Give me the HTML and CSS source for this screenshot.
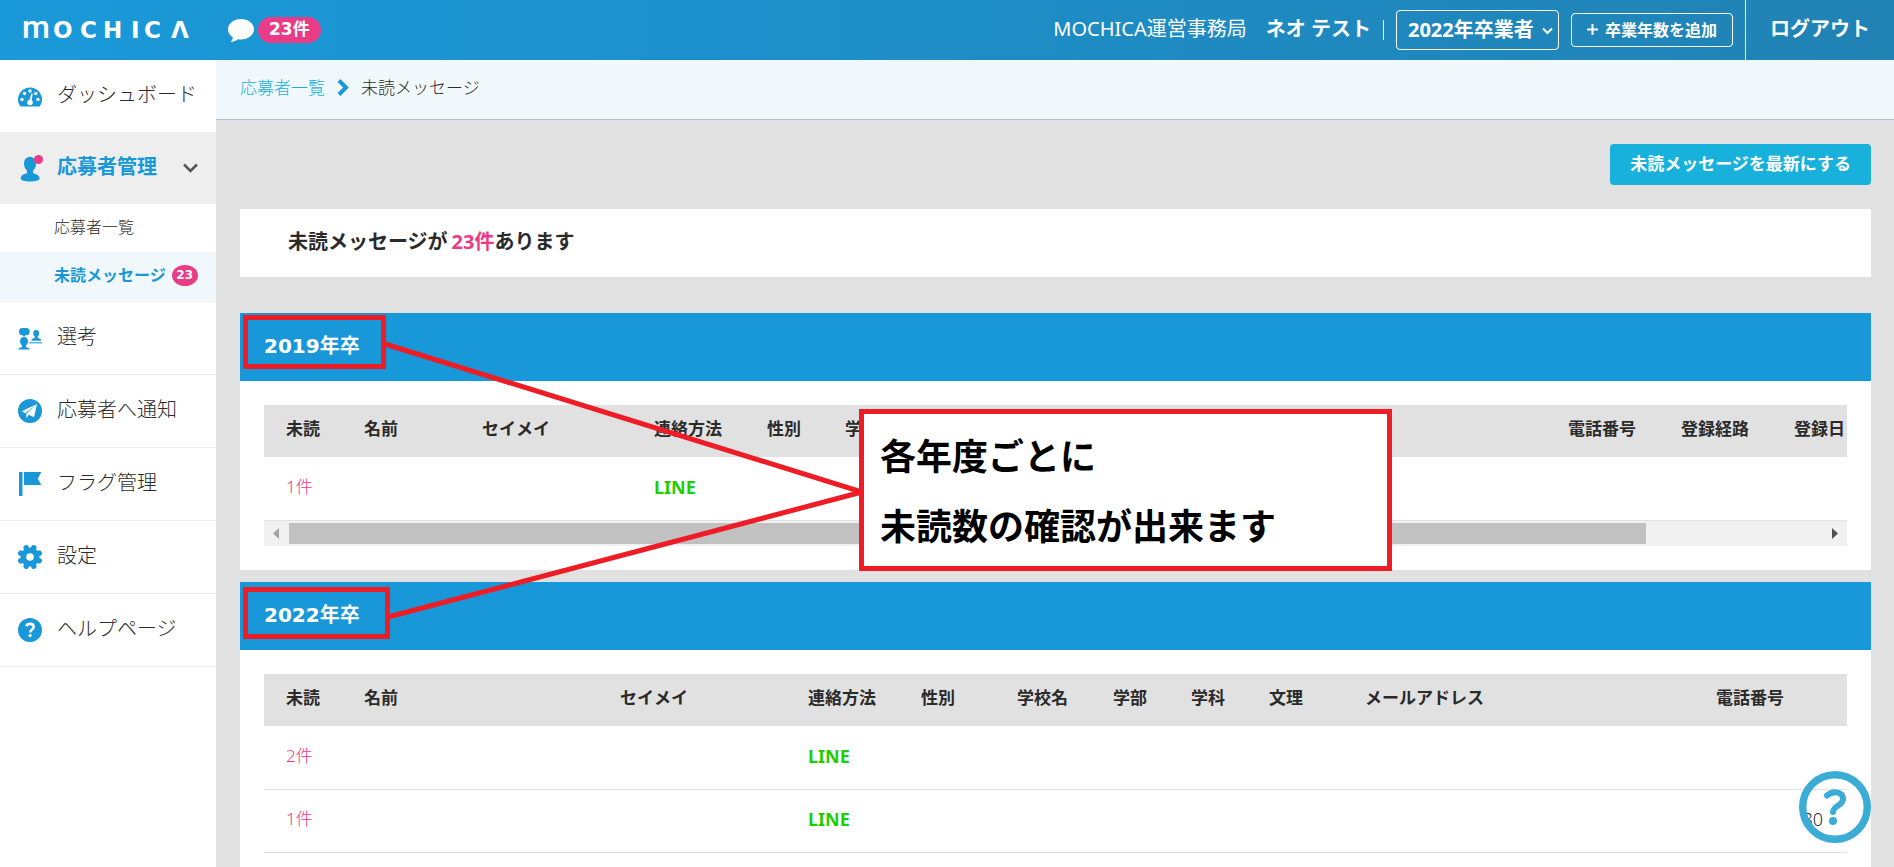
FILE: index.html
```html
<!DOCTYPE html>
<html lang="ja">
<head>
<meta charset="utf-8">
<meta name="viewport" content="width=device-width, initial-scale=1">
<title>未読メッセージ | MOCHICA</title>
<link rel="stylesheet" href="styles.css">
</head>
<body>
<div class="page">
  <header class="topbar">
    <a class="logo" href="#" aria-label="MOCHICA">
      <svg width="170" height="20" viewBox="0 0 170 20" fill="#fff">
        <text class="logo-m" x="-2" y="18">m</text>
        <text class="logo-caps" x="29 56 79 107 120 147" y="18">OCHICΛ</text>
      </svg>
    </a>
    <a class="unread" href="#">
      <svg width="26" height="23" viewBox="0 0 26 23" fill="#fff"><path d="M13 0C5.800 0 0 4.600 0 10.300c0 3.300 1.900 6.200 4.900 8.100-.2 1.300-.8 2.700-1.800 3.700-.3.400 0 .9.400.8 2.500-.2 4.700-1.200 6.400-2.600 1 .2 2 .3 3.100.3 7.200 0 13-4.600 13-10.300S20.200 0 13 0z"/></svg>
      <span class="unread-badge">23件</span>
    </a>
    <div class="account">
      <span class="company">MOCHICA運営事務局</span>
      <strong class="user">ネオ テスト</strong>
      <span class="bar"></span>
      <span class="year">
        <select class="year-select" aria-label="卒業年"><option>2022年卒業者</option></select>
        <svg class="year-arrow" width="11" height="8" viewBox="0 0 11 8" fill="none" stroke="#fff" stroke-width="2"><path d="M1 1.500l4.500 4.500L10 1.500"/></svg>
      </span>
      <button class="add-year" type="button"><svg width="11" height="11" viewBox="0 0 11 11" stroke="#fff" stroke-width="2"><path d="M5.500 0v11M0 5.500h11"/></svg>卒業年数を追加</button>
    </div>
    <a class="logout" href="#">ログアウト</a>
  </header>

  <div class="body">
    <nav class="sidebar">
      <a class="item plain" href="#">
        <svg width="24" height="24" viewBox="0 0 24 24"><path d="M2.500 22.500C.9 20.500 0 18 0 15.500 0 9 5.400 3.500 12 3.500S24 9 24 15.500c0 2.500-.9 5-2.500 7z" fill="#1998d9"/><g fill="#fff"><circle cx="4" cy="15.500" r="1.700"/><circle cx="6.500" cy="9.500" r="1.700"/><circle cx="12" cy="7" r="1.700"/><circle cx="17.700" cy="9.500" r="1.700"/><circle cx="20" cy="15.500" r="1.700"/><circle cx="12" cy="18.500" r="2.800"/><path d="M13.400 9.500l1.300.3-1.500 9-2.400-.6z"/></g></svg>
        <span class="label">ダッシュボード</span>
      </a>
      <a class="item plain current" href="#">
        <svg width="24" height="28" viewBox="0 0 24 28" overflow="visible"><path d="M12 3c-3.800 0-6 2.700-6 6.500 0 3 1 5.500 3 7v2.700c-3.500.8-6.300 2.300-6.300 5 0 2.300 4 3.300 9.300 3.300s9.600-1 9.600-3.300c0-2.700-3.100-4.200-6.600-5v-2.700c2-1.500 3-4 3-7C18 5.700 15.800 3 12 3z" fill="#1998d9"/><circle cx="20.500" cy="5.500" r="4.500" fill="#ea3c86"/></svg>
        <span class="label">応募者管理</span>
        <svg class="caret" width="15" height="10" viewBox="0 0 15 10" fill="none" stroke="#555" stroke-width="2.500"><path d="M1 1.500l6.500 6.500L14 1.500"/></svg>
      </a>
      <div class="submenu">
        <a class="sub" href="#">応募者一覧</a>
        <a class="sub selected" href="#">未読メッセージ<span class="count">23</span></a>
      </div>
      <a class="item" href="#">
        <svg width="24" height="24" viewBox="0 0 24 24" fill="#1998d9"><path d="M4 2h4.500c2 0 3.200 1.400 3.200 3.500S10.500 9.200 8.500 9.200H7.300L6 11 4.700 9.200H4C2 9.200 1 7.600 1 5.500S2 2 4 2zM6 11c2.700 0 4 1.700 4 4 0 2-.7 3.400-2 4.400v1.800c2 .3 3.700.8 4 2.300H0c.3-1.500 2-2 4-2.300v-1.800c-1.300-1-2-2.400-2-4.400 0-2.300 1.300-4 4-4z"/><path d="M18.200 4c2 0 3 1.300 3 3 0 1.600-.5 2.700-1.400 3.400v1.700c1.800.3 3.200 1 3.400 2.600h-9.900c.2-1.600 1.600-2.300 3.400-2.600v-1.700c-1-.7-1.500-1.800-1.500-3.400 0-1.700 1-3 3-3z"/><path d="M11 16h13v1.500H11z" opacity=".7"/></svg>
        <span class="label">選考</span>
      </a>
      <a class="item" href="#">
        <svg width="24" height="24" viewBox="0 0 24 24"><circle cx="12" cy="12" r="12" fill="#1998d9"/><path d="M19 5L3.800 12.200l3.500 2zM19 5L8.300 14.700v4.300l2.200-2.800zM19 5l-8 10.700 5 2.500z" fill="#fff"/></svg>
        <span class="label">応募者へ通知</span>
      </a>
      <a class="item" href="#">
        <svg width="24" height="24" viewBox="0 0 24 24" fill="#1998d9"><path d="M1 0h3.500v24H1zM6 0h17.300l-3.500 6.700 3.500 6.300H6z"/></svg>
        <span class="label">フラグ管理</span>
      </a>
      <a class="item" href="#">
        <svg width="24" height="24" viewBox="0 0 24 24"><g fill="#1998d9"><circle cx="12" cy="12" r="9.500"/><g stroke="#1998d9" stroke-width="5.500" stroke-linecap="round"><path d="M8.200 2.800l7.600 18.400M15.800 2.800L8.200 21.200M2.800 8.200l18.400 7.600M2.800 15.800l18.400-7.600"/></g></g><circle cx="12" cy="12" r="3.800" fill="#fff"/></svg>
        <span class="label">設定</span>
      </a>
      <a class="item" href="#">
        <svg width="24" height="24" viewBox="0 0 24 24"><circle cx="12" cy="12" r="12" fill="#1998d9"/><path d="M8.300 8.200c.6-1.600 2-2.300 3.700-2.300 2.200 0 3.700 1.200 3.700 3 0 2.600-3.500 2.700-3.500 5.600" fill="none" stroke="#fff" stroke-width="2.600"/><circle cx="12.100" cy="17.600" r="1.700" fill="#fff"/></svg>
        <span class="label">ヘルプページ</span>
      </a>
    </nav>

    <div class="content">
      <div class="crumbs">
        <a href="#">応募者一覧</a>
        <svg width="12" height="17" viewBox="0 0 12 17" fill="none" stroke="#1998d9" stroke-width="4"><path d="M2 1.500l7 7-7 7"/></svg>
        <span>未読メッセージ</span>
      </div>
      <main class="main">
        <button class="refresh" type="button">未読メッセージを最新にする</button>
        <p class="notice">未読メッセージが<em>23件</em>あります</p>

        <section class="group">
          <h2 class="group-title">2019年卒</h2>
          <div class="group-body">
            <div class="scroller">
              <table class="list y2019">
                <colgroup><col class="c-unread"><col class="c-name"><col class="c-kana"><col class="c-way"><col class="c-sex"><col class="c-school"><col class="c-short"><col class="c-short"><col class="c-field"><col class="c-mail"><col class="c-tel"><col class="c-route"><col class="c-date"></colgroup>
                <thead><tr><th>未読</th><th>名前</th><th>セイメイ</th><th>連絡方法</th><th>性別</th><th>学校名</th><th></th><th></th><th></th><th></th><th>電話番号</th><th>登録経路</th><th>登録日</th></tr></thead>
                <tbody><tr><td><a class="num" href="#">1件</a></td><td></td><td></td><td class="line">LINE</td><td></td><td></td><td></td><td></td><td></td><td></td><td></td><td></td><td></td></tr></tbody>
              </table>
            </div>
            <div class="scrollbar">
              <svg width="25" height="25" viewBox="0 0 25 25" fill="#a3a3a3"><path d="M15 7v11l-6-5.500z"/></svg>
              <div class="track"><div class="thumb"></div></div>
              <svg width="25" height="25" viewBox="0 0 25 25" fill="#505050"><path d="M10 7v11l6-5.500z"/></svg>
            </div>
          </div>
        </section>

        <section class="group last">
          <h2 class="group-title">2022年卒</h2>
          <div class="group-body">
            <div class="scroller">
              <table class="list y2022">
                <colgroup><col class="c-unread"><col class="c-name"><col class="c-kana"><col class="c-way"><col class="c-sex"><col class="c-school"><col class="c-short"><col class="c-short"><col class="c-field"><col class="c-mail"><col class="c-tel"></colgroup>
                <thead><tr><th>未読</th><th>名前</th><th>セイメイ</th><th>連絡方法</th><th>性別</th><th>学校名</th><th>学部</th><th>学科</th><th>文理</th><th>メールアドレス</th><th>電話番号</th></tr></thead>
                <tbody>
                  <tr><td><a class="num" href="#">2件</a></td><td></td><td></td><td class="line">LINE</td><td></td><td></td><td></td><td></td><td></td><td></td><td></td></tr>
                  <tr><td><a class="num" href="#">1件</a></td><td></td><td></td><td class="line">LINE</td><td></td><td></td><td></td><td></td><td></td><td></td><td class="tel">80</td></tr>
                </tbody>
              </table>
            </div>
          </div>
        </section>
      </main>
    </div>
  </div>

  <svg class="marks" width="1894" height="867" viewBox="0 0 1894 867" fill="none" stroke="#ee1c24" stroke-width="5">
    <path d="M245.500 317.500h138v49h-138zM245.500 589.500h142v47h-142zM385 344l477 148-474 125"/>
  </svg>
  <aside class="callout">各年度ごとに<br>未読数の確認が出来ます</aside>
  <button class="help" type="button" aria-label="ヘルプ">
    <svg width="72" height="72" viewBox="0 0 72 72" fill="none" stroke="#3aacd6"><circle cx="36" cy="36" r="32.300" stroke-width="7.400"/><path d="M28 24.500c2.500-2.200 5.200-3.300 8.200-3.300 4.700 0 7.800 2.700 7.800 6.800 0 6.800-10 6.500-10 13" stroke-width="6" stroke-linecap="round"/><circle cx="34" cy="50" r="4" fill="#3aacd6" stroke="none"/></svg>
  </button>
</div>
</body>
</html>
```
FILE: styles.css
```css
* { box-sizing: border-box; }
body {
  margin: 0;
  background: #e1e1e1;
  color: #2a2a2a;
  font-family: "Noto Sans", "Noto Sans CJK JP", sans-serif;
  font-size: 17px;
  line-height: 24px;
}
a { color: inherit; text-decoration: none; }
svg { display: block; flex: none; }
button, select { font-family: inherit; cursor: pointer; }

.page { position: relative; display: flex; flex-direction: column; min-height: 100vh; overflow: hidden; }

/* top bar */
.topbar {
  display: flex;
  height: 60px;
  color: #fff;
  font-size: 20px;
  background: linear-gradient(to right, #1a99d9, #2182b4);
}
.logo { display: flex; align-items: center; padding-left: 24px; }
.logo svg { overflow: visible; }
.logo-m { font: 500 32px Roboto, sans-serif; }
.logo-caps { font: 700 23px "DejaVu Sans", sans-serif; }
.unread { display: flex; align-items: center; gap: 4px; margin-left: 34px; }
.unread-badge {
  padding: 0 11px 2px;
  border-radius: 13px;
  background: #ea3c86;
  font: 700 17px/24px "DejaVu Sans", "Noto Sans CJK JP", sans-serif;
}
.account { display: flex; align-items: center; margin-left: auto; padding-right: 12px; white-space: nowrap; }
.company, .user, .logout { padding-bottom: 3px; }
.company { margin-right: 19px; }
.bar { width: 1px; height: 20px; margin: 0 12px; background: #fff; }
.year { position: relative; margin-right: 12px; }
.year-select {
  appearance: none;
  display: block;
  height: 40px;
  width: 163px;
  padding: 0 0 2px 11px;
  border: 1px solid #fff;
  border-radius: 4px;
  background: transparent;
  color: #fff;
  font-size: 20px;
  font-weight: 700;
}
.year-arrow { position: absolute; right: 6px; top: 17px; pointer-events: none; }
.add-year {
  display: flex;
  align-items: center;
  gap: 7px;
  height: 34px;
  padding: 0 15px 2px;
  border: 1px solid #fff;
  border-radius: 4px;
  background: transparent;
  color: #fff;
  font-size: 16px;
  font-weight: 700;
}
.logout { display: flex; align-items: center; padding-left: 24px; padding-right: 24px; border-left: 1px solid #fff; font-weight: 700; }

/* side navigation */
.body { display: flex; flex: 1; }
.sidebar { flex: none; width: 216px; background: #fff; }
.item {
  display: flex;
  align-items: center;
  gap: 15px;
  height: 73px;
  padding: 0 18px;
  border-bottom: 1px solid #eee;
  font-size: 20px;
  font-weight: 300;
  white-space: nowrap;
}
.plain { height: 72px; border-bottom: 0; }
.label { padding-bottom: 3px; }
.current { background: #eee; color: #1998d9; font-weight: 700; }
.caret { margin-left: auto; }
.submenu { padding-bottom: 1px; border-bottom: 1px solid #eee; }
.sub {
  display: flex;
  align-items: center;
  gap: 6px;
  height: 48px;
  padding: 0 0 2px 54px;
  font-size: 16px;
  white-space: nowrap;
  font-weight: 300;
}
.selected { background: #f0f8fc; color: #1998d9; font-weight: 700; }
.count {
  width: 26px;
  border-radius: 50%;
  background: #ea3c86;
  color: #fff;
  font: 700 12px/21px "DejaVu Sans", sans-serif;
  text-align: center;
}

/* content */
.content { display: flex; flex: 1; flex-direction: column; min-width: 0; }
.crumbs {
  display: flex;
  align-items: center;
  gap: 12px;
  height: 60px;
  padding: 0 24px 4px;
  border-bottom: 1px solid #b6c0dc;
  background: #f0f8fc;
  font-weight: 300;
}
.crumbs a { color: #18b1dc; }
.main { display: flex; flex: 1; flex-direction: column; padding: 24px 23px 0 24px; }
.refresh {
  align-self: flex-end;
  height: 41px;
  padding: 0 20px 4px;
  border: 0;
  border-radius: 4px;
  background: #18b1dc;
  color: #fff;
  font-size: 17px;
  font-weight: 700;
}
.notice {
  margin: 24px 0 36px;
  padding: 21px 48px 23px;
  background: #fff;
  font-size: 20px;
  font-weight: 700;
}
.notice em { margin-left: 4px; color: #ea3c86; font-style: normal; }
.group { margin-bottom: 12px; background: #fff; }
.last { flex: 1; margin-bottom: 0; }
.group-title {
  margin: 0;
  padding: 21px 24px 23px;
  background: #1998d9;
  color: #fff;
  font: 700 20px/24px "DejaVu Sans", "Noto Sans CJK JP", sans-serif;
}
.group-body { padding: 24px; }
.last .group-body { padding-bottom: 0; }
.scroller { overflow: hidden; }
.list { table-layout: fixed; border-collapse: separate; border-spacing: 0; width: 100%; }
.list th, .list td { padding: 0 0 4px 22px; text-align: left; white-space: nowrap; }
.list th { height: 53px; border-bottom: 1px solid #fff; background: #e1e1e1; background-clip: padding-box; font-weight: 700; }
.list td { height: 63px; border-bottom: 1px solid #e1e1e1; font-weight: 300; }
.num { color: #ea3c86; }
.list .line { color: #1fce00; font-size: 18px; font-weight: 700; }
.list .tel { padding-right: 24px; text-align: right; font-size: 18px; }
.c-unread, .c-short { width: 78px; }
.c-school, .c-field { width: 96px; }
.c-way, .c-tel, .c-route { width: 113px; }
.y2019 .c-name { width: 118px; }
.y2019 .c-kana { width: 172px; }
.y2019 .c-sex { width: 78px; }
.y2019 .c-date { width: 75px; }
.y2022 .c-name { width: 256px; }
.y2022 .c-kana { width: 188px; }
.y2022 .c-sex { width: 96px; }
.y2022 .c-tel { width: 153px; }
.scrollbar { display: flex; height: 25px; background: #f1f1f1; }
.track { flex: 1; padding: 2px 0; }
.thumb { width: 88.5%; height: 21px; background: #c1c1c1; }

/* overlays */
.marks { position: absolute; left: 0; top: 0; pointer-events: none; }
.callout {
  position: absolute;
  left: 859px;
  top: 409px;
  padding: 8px 16px 4px;
  width: 533px;
  border: 5px solid #ee1c24;
  background: #fff;
  color: #000;
  font-size: 36px;
  font-weight: 700;
  line-height: 70px;
  white-space: nowrap;
}
.help { position: fixed; right: 23px; bottom: 24px; padding: 0; border: 0; background: none; }
```
